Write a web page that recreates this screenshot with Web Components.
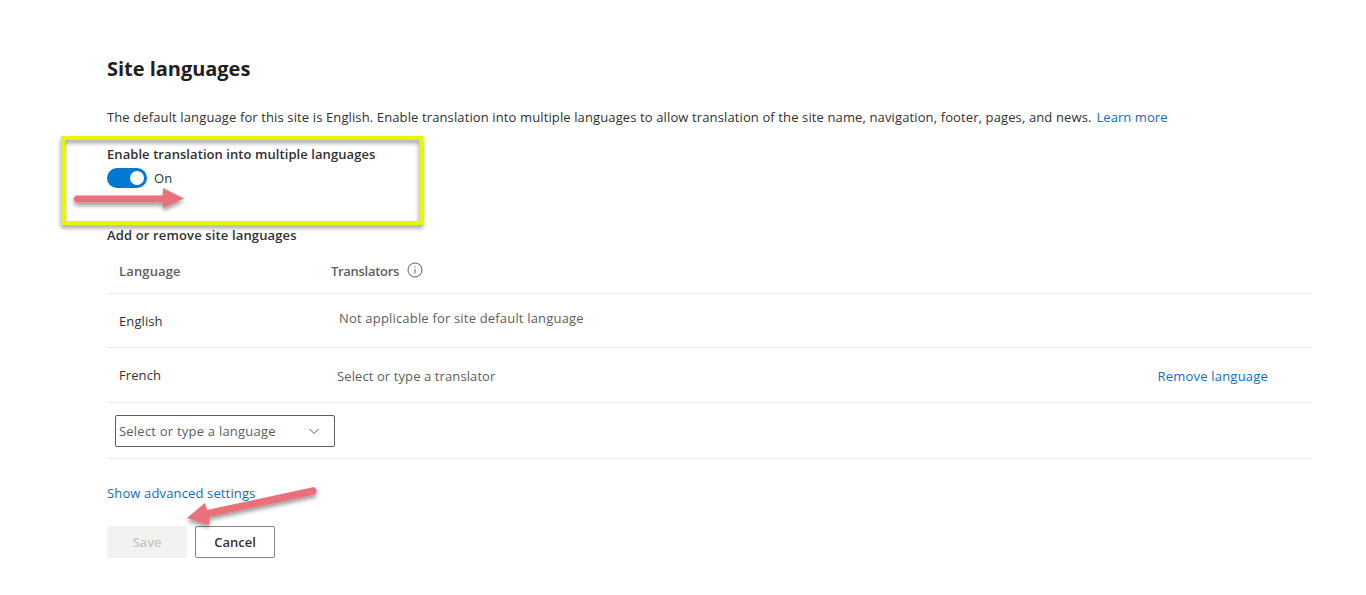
<!DOCTYPE html>
<html lang="en"><head><meta charset="utf-8"><title>Site languages</title>
<style>
html,body{margin:0;background:#fff}
body{font-family:"Open Sans","Noto Sans",sans-serif;font-size:13px;color:#323130;overflow:hidden;height:595px}
</style></head><body>
<site-page>
  <site-heading>Site languages</site-heading>
  <p-text>The default language for this site is English. Enable translation into multiple languages to allow translation of the site name, navigation, footer, pages, and news.<ms-link style="margin-left:5px;letter-spacing:.06px">Learn more</ms-link></p-text>
  <on-toggle label="Enable translation into multiple languages"></on-toggle>
  <field-label>Add or remove site languages</field-label>
  <lang-table>
    <lang-row kind="head"><span slot="lang">Language</span><span slot="trans" style="display:inline-flex;align-items:center;gap:8px;letter-spacing:-.3px">Translators <svg width="16" height="16" viewBox="0 0 16 16" fill="none" stroke="#605e5c" style="margin-top:-2px"><circle cx="8" cy="8" r="7"/><path d="M8 7v4.500M8 4.400v1.200"/></svg></span></lang-row>
    <lang-row h="54"><span slot="lang">English</span><span slot="trans" style="margin:-6px 0 0 8px;display:block;letter-spacing:.18px">Not applicable for site default language</span></lang-row>
    <lang-row h="55"><span slot="lang">French</span><span slot="trans" style="margin:2px 0 0 6px;display:block">Select or type a translator</span><ms-link slot="action" style="display:block;margin-top:2px;letter-spacing:.2px">Remove language</ms-link></lang-row>
    <lang-row kind="add" h="56"><lang-combo slot="lang" placeholder="Select or type a language"></lang-combo></lang-row>
  </lang-table>
  <ms-link style="display:block;margin-top:25px;line-height:18px;letter-spacing:.14px">Show advanced settings</ms-link>
  <button-bar><ms-button disabled>Save</ms-button><ms-button>Cancel</ms-button></button-bar>
</site-page>
<call-outs></call-outs>
<script>
const def=(n,css,html)=>customElements.define(n,class extends HTMLElement{
  constructor(){super();this.attachShadow({mode:'open'}).innerHTML=`<style>${css}</style>${html}`}
});
def('site-page',':host{display:block;padding:55px 55px 0 107px}','<slot></slot>');
def('site-heading',':host{display:block;font-size:20px;font-weight:700;line-height:27px;color:#201f1e;letter-spacing:-.03px}','<slot></slot>');
def('p-text',':host{display:block;margin-top:26px;line-height:18px;color:#323130;letter-spacing:.12px;white-space:nowrap}','<slot></slot>');
def('ms-link',':host{color:#106ebe;letter-spacing:.1px}','<slot></slot>');
class OnToggle extends HTMLElement{constructor(){super();const s=this.attachShadow({mode:'open'});
 s.innerHTML=`<style>:host{display:block;margin-top:19px;height:81px}
 .l{font-weight:600;line-height:18px;letter-spacing:.07px;color:#323130}
 .r{display:flex;align-items:center;gap:7px;margin-top:5px;letter-spacing:.1px}
 .t{width:40px;height:20px;border-radius:10px;background:#0078d4;display:flex;align-items:center;justify-content:flex-end;padding-right:3px;box-sizing:border-box}
 .k{width:14px;height:14px;border-radius:50%;background:#fff}</style>
 <div class="l">${this.getAttribute('label')}</div><div class="r"><div class="t"><div class="k"></div></div><span>On</span></div>`}}
customElements.define('on-toggle',OnToggle);
def('field-label',':host{display:block;font-weight:600;line-height:18px;letter-spacing:.14px}','<slot></slot>');
def('lang-table',':host{display:block}','<slot></slot>');
class LangRow extends HTMLElement{constructor(){super();const k=this.getAttribute('kind'),head=k==='head',add=k==='add',h=this.getAttribute('h')||50;
 this.attachShadow({mode:'open'}).innerHTML=`<style>:host{display:grid;grid-template-columns:${add?'8px 1fr':'12px 212px 1fr auto'};align-items:center;height:${h}px;box-sizing:border-box;border-bottom:1px solid #edebe9;letter-spacing:.1px;${head?'padding-top:5px;font-weight:600;color:#605e5c;letter-spacing:.15px;':'color:#323130;'}}
 .a{padding-right:43px}</style><span></span><div><slot name="lang"></slot></div>${add?'':'<div style="color:#605e5c"><slot name="trans"></slot></div><div class="a"><slot name="action"></slot></div>'}`}}
customElements.define('lang-row',LangRow);
class LangCombo extends HTMLElement{constructor(){super();
 this.attachShadow({mode:'open'}).innerHTML=`<style>:host{display:flex;align-items:center;justify-content:space-between;width:220px;height:32px;box-sizing:border-box;border:1px solid #605e5c;border-radius:2px;padding:0 14px 0 3px;color:#605e5c;letter-spacing:.22px}</style><span>${this.getAttribute('placeholder')}</span><svg width="12" height="12" viewBox="0 0 12 12" fill="none" stroke="#605e5c"><path d="M1.500 4l4.500 4.500L10.500 4"/></svg>`}}
customElements.define('lang-combo',LangCombo);
def('button-bar',':host{display:flex;gap:8px;margin-top:24px}','<slot></slot>');
class MsButton extends HTMLElement{constructor(){super();const d=this.hasAttribute('disabled');
 this.attachShadow({mode:'open'}).innerHTML=`<style>:host{display:flex;align-items:center;justify-content:center;width:80px;height:32px;box-sizing:border-box;border-radius:2px;font-weight:600;${d?'background:#f3f2f1;color:#c8c6c4;':'background:#fff;border:1px solid #8a8886;color:#323130;'}}</style><slot></slot>`}}
customElements.define('ms-button',MsButton);
def('call-outs',':host{position:absolute;left:0;top:0;width:1366px;height:595px;pointer-events:none}svg{display:block}',`<svg width="1366" height="595" viewBox="0 0 1366 595" fill="none">
<defs><filter id="s" x="-10%" y="-30%" width="120%" height="170%"><feDropShadow dx="0" dy="3" stdDeviation="2" flood-color="#000" flood-opacity=".4"/></filter></defs>
<g filter="url(#s)"><rect x="63" y="138" width="358" height="85" stroke="#e6f700" stroke-width="4"/></g>
<g filter="url(#s)" fill="#ea6f7a"><path d="M76 195.500Q71 199 76 202.500H163V208L184 198.500 163 188V195.500Z"/></g>
<g filter="url(#s)" fill="#ea6f7a"><path d="M314 487 207 510 205 503 187 518 209 525 209 517 315 494.500Q319 490 314 487Z"/></g>
</svg>`);
</script>
</body></html>
